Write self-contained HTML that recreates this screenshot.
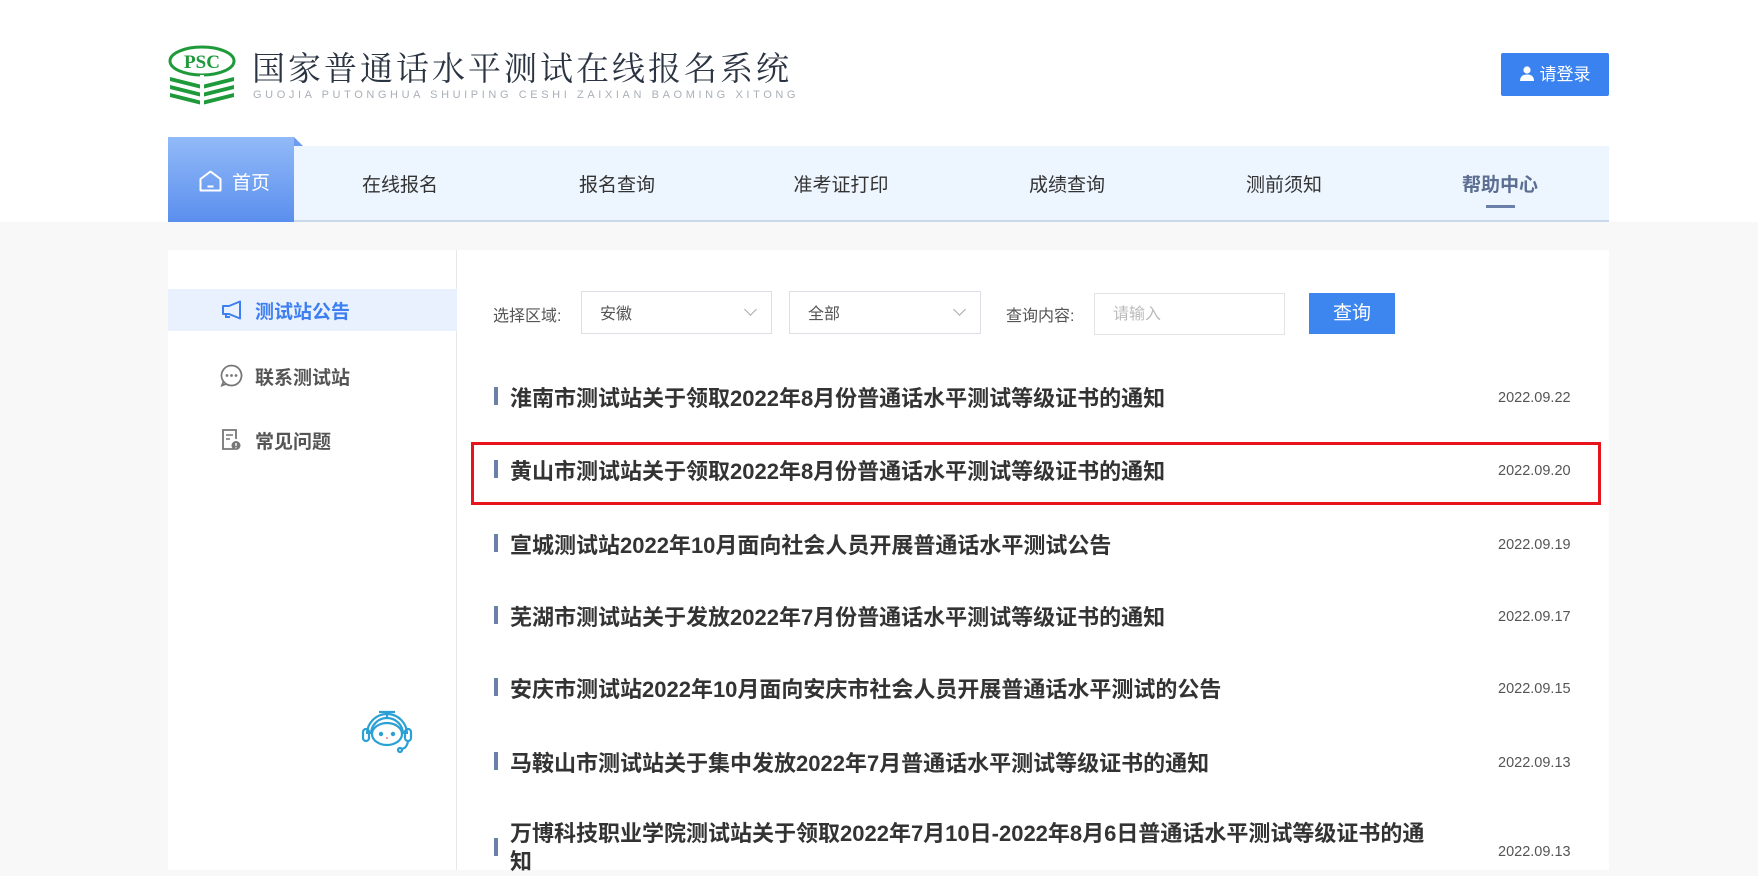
<!DOCTYPE html>
<html><head><meta charset="utf-8">
<style>
*{margin:0;padding:0;box-sizing:border-box}
body{width:1758px;height:860px;overflow:hidden;background:#f8f8f8;font-family:"Liberation Sans","Noto Sans CJK SC",sans-serif;position:relative}
.top{position:absolute;left:0;top:0;width:1758px;height:222px;background:#fff}
.abs{position:absolute}
.title{left:252px;top:48px;font-family:"Liberation Serif","Noto Serif CJK SC",serif;font-size:33px;letter-spacing:3px;color:#2b3442;white-space:nowrap;line-height:44px}
.sub{left:253px;top:89px;font-size:11px;letter-spacing:3.6px;color:#aab0b8;white-space:nowrap}
.login{left:1501px;top:53px;width:108px;height:43px;background:#3a82f0;border-radius:2px;color:#fff;font-size:17px;line-height:43px;text-align:center}
.nav{left:294px;top:146px;width:1315px;height:76px;background:#edf5fe;border-bottom:2px solid #c9d8ea}
.home{left:168px;top:137px;width:126px;height:85px;background:linear-gradient(#92baf8,#5b8fee);color:#fff;font-size:19px}
.fold{left:294px;top:137px;width:0;height:0;border-left:9px solid #6d9cf0;border-top:9px solid transparent}
.ni{top:170px;font-size:19px;color:#333;transform:translateX(-50%);white-space:nowrap}
.card{left:168px;top:250px;width:1441px;height:620px;background:#fff}
.side{left:168px;top:250px;width:289px;height:620px;border-right:1px solid #e8e8e8}
.act{left:168px;top:289px;width:289px;height:42px;background:#e8f1fd}
.si{left:255px;font-size:19px;font-weight:bold;color:#555;white-space:nowrap}
.lab{font-size:16px;color:#555;top:302px}
.sel{top:291px;height:43px;border:1px solid #dcdfe6;background:#fff;font-size:16px;color:#555;line-height:46px;padding-left:18px}
.sel i{position:absolute;right:16px;top:13px;width:9px;height:9px;border-right:1px solid #aaa;border-bottom:1px solid #aaa;transform:rotate(45deg)}
.row{left:494px;font-size:22px;font-weight:bold;color:#333;white-space:nowrap}
.bar{position:absolute;left:0;width:4px;height:18px;background:#6b80a8}
.row span{margin-left:16px}
.date{left:1498px;font-size:14.5px;color:#555}
</style></head><body>
<div class="top"></div>
<svg class="abs" style="left:168px;top:45px" width="68" height="62" viewBox="0 0 68 62">
<ellipse cx="34" cy="16" rx="32" ry="14" fill="none" stroke="#1e9a3a" stroke-width="3"/>
<text x="34" y="23" text-anchor="middle" font-family="Liberation Serif,serif" font-weight="bold" font-size="19" fill="#1e9a3a">PSC</text>
<g fill="#1e9a3a">
<polygon points="2,32 34,40 66,32 66,36 34,44 2,36"/>
<polygon points="2,40 34,48 66,40 66,44 34,52 2,44"/>
<polygon points="2,48 34,56 66,48 66,52 34,60 2,52"/>
</g>
<rect x="32" y="30" width="4" height="32" fill="#fff"/>
</svg>
<div class="abs title">国家普通话水平测试在线报名系统</div>
<div class="abs sub">GUOJIA PUTONGHUA SHUIPING CESHI ZAIXIAN BAOMING XITONG</div>
<div class="abs login"><svg width="14" height="15" viewBox="0 0 14 15" style="vertical-align:-1px;margin-right:6px"><circle cx="7" cy="4" r="3.6" fill="#fff"/><path d="M0 15 Q0 8.5 7 8.5 Q14 8.5 14 15Z" fill="#fff"/></svg>请登录</div>
<div class="abs nav"></div>
<div class="abs home"><svg class="abs" style="left:31px;top:33px" width="23" height="22" viewBox="0 0 23 22"><path d="M1.5 9 L11.5 1.5 L21.5 9 V20.5 H1.5Z" fill="none" stroke="#fff" stroke-width="2" stroke-linejoin="round"/><path d="M8.5 16.5 H14.5" stroke="#fff" stroke-width="2"/></svg><span class="abs" style="left:64px;top:31px">首页</span></div>
<div class="abs fold"></div>
<div class="abs ni" style="left:400px">在线报名</div>
<div class="abs ni" style="left:617px">报名查询</div>
<div class="abs ni" style="left:841px">准考证打印</div>
<div class="abs ni" style="left:1067px">成绩查询</div>
<div class="abs ni" style="left:1284px">测前须知</div>
<div class="abs ni" style="left:1500px;font-weight:bold;color:#5c6f92">帮助中心</div>
<div class="abs" style="left:1486px;top:205px;width:29px;height:3px;background:#6b80a8"></div>

<div class="abs card"></div>
<div class="abs side"></div>
<div class="abs act"></div>
<svg class="abs" style="left:221px;top:300px" width="22" height="20" viewBox="0 0 22 20"><path d="M2 6 H8 L19 1.5 V18.5 L8 14 H2Z" fill="none" stroke="#3d7ef0" stroke-width="2" stroke-linejoin="round"/><path d="M5 14 V17 H9" fill="none" stroke="#3d7ef0" stroke-width="2"/></svg>
<div class="abs si" style="top:297px;color:#3d7ef0">测试站公告</div>
<svg class="abs" style="left:220px;top:364px" width="23" height="23" viewBox="0 0 23 23"><path d="M11.5 1.5 A10 10 0 1 1 3.5 17.5 L2 21.5 L6.5 19.8" fill="none" stroke="#777" stroke-width="1.8"/><path d="M3.5 17.5 A10 10 0 0 1 11.5 1.5" fill="none" stroke="#777" stroke-width="1.8"/><circle cx="7" cy="11.5" r="1.4" fill="#777"/><circle cx="11.5" cy="11.5" r="1.4" fill="#777"/><circle cx="16" cy="11.5" r="1.4" fill="#777"/></svg>
<div class="abs si" style="top:363px">联系测试站</div>
<svg class="abs" style="left:221px;top:428px" width="20" height="23" viewBox="0 0 20 23"><path d="M13 21 H2 V2 H15 V11" fill="none" stroke="#777" stroke-width="1.8"/><path d="M5 7 H12 M5 11 H9" stroke="#777" stroke-width="1.6"/><circle cx="15" cy="17.5" r="4.5" fill="#777"/><path d="M15 15 V18 M15 19.3 V20.3" stroke="#fff" stroke-width="1.4"/></svg>
<div class="abs si" style="top:427px">常见问题</div>
<svg class="abs" style="left:357px;top:704px" width="60" height="50" viewBox="0 0 60 50"><g fill="none" stroke="#2aa0d4" stroke-width="2.2"><path d="M22 8 H38 M30 8 V13"/><path d="M14 30 A16 16 0 0 1 46 30"/><path d="M10 30 A20 20 0 0 1 50 30"/><ellipse cx="30" cy="30" rx="15" ry="11"/><rect x="6" y="25" width="6" height="12" rx="3"/><rect x="48" y="25" width="6" height="12" rx="3"/><path d="M51 37 Q50 44 45 45"/><circle cx="43" cy="46" r="2"/></g><circle cx="24" cy="30" r="2.2" fill="#2aa0d4"/><circle cx="36" cy="30" r="2.2" fill="#2aa0d4"/><circle cx="30" cy="34" r="1" fill="#f08080"/></svg>

<div class="abs lab" style="left:493px">选择区域:</div>
<div class="abs sel" style="left:581px;width:191px">安徽<i></i></div>
<div class="abs sel" style="left:789px;width:192px">全部<i></i></div>
<div class="abs lab" style="left:1006px">查询内容:</div>
<div class="abs sel" style="left:1094px;width:191px;color:#bbb;border-color:#e3e3e3;top:293px;height:42px;line-height:42px">请输入</div>
<div class="abs" style="left:1309px;top:293px;width:86px;height:41px;background:#3d86f0;color:#fff;font-size:19px;line-height:41px;text-align:center">查询</div>

<div class="abs row" style="top:381px"><b class="bar" style="top:6px"></b><span>淮南市测试站关于领取2022年8月份普通话水平测试等级证书的通知</span></div>
<div class="abs date" style="top:390px">2022.09.22</div>
<div class="abs" style="left:471px;top:442px;width:1130px;height:63px;border:3px solid #e8141c"></div>
<div class="abs row" style="top:454px"><b class="bar" style="top:6px"></b><span>黄山市测试站关于领取2022年8月份普通话水平测试等级证书的通知</span></div>
<div class="abs date" style="top:463px">2022.09.20</div>
<div class="abs row" style="top:528px"><b class="bar" style="top:6px"></b><span>宣城测试站2022年10月面向社会人员开展普通话水平测试公告</span></div>
<div class="abs date" style="top:537px">2022.09.19</div>
<div class="abs row" style="top:600px"><b class="bar" style="top:6px"></b><span>芜湖市测试站关于发放2022年7月份普通话水平测试等级证书的通知</span></div>
<div class="abs date" style="top:609px">2022.09.17</div>
<div class="abs row" style="top:672px"><b class="bar" style="top:6px"></b><span>安庆市测试站2022年10月面向安庆市社会人员开展普通话水平测试的公告</span></div>
<div class="abs date" style="top:681px">2022.09.15</div>
<div class="abs row" style="top:746px"><b class="bar" style="top:6px"></b><span>马鞍山市测试站关于集中发放2022年7月普通话水平测试等级证书的通知</span></div>
<div class="abs date" style="top:755px">2022.09.13</div>
<div class="abs row" style="top:820px;white-space:normal;width:936px;line-height:28px"><b class="bar" style="top:18px"></b><div style="margin-left:16px">万博科技职业学院测试站关于领取2022年7月10日-2022年8月6日普通话水平测试等级证书的通知</div></div>
<div class="abs date" style="top:844px">2022.09.13</div>
</body></html>
